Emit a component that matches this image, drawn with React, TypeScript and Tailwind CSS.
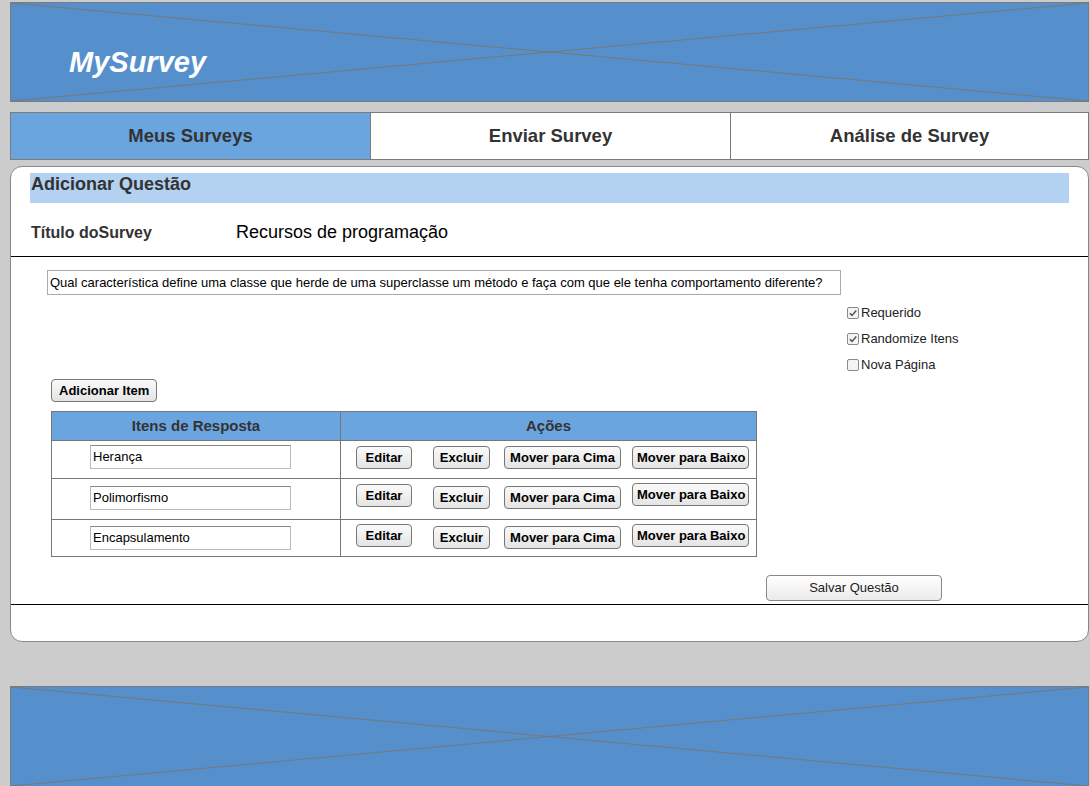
import React from 'react';

const items = [
  { text: 'Herança', input: 'mt-[4px]', edit: 'mt-[5px]', del: 'mt-[5px]', up: 'mt-[5px]', down: 'mt-[5px]' },
  { text: 'Polimorfismo', input: 'mt-[7px]', edit: 'mt-[5px]', del: 'mt-[7px]', up: 'mt-[7px]', down: 'mt-[4px]' },
  { text: 'Encapsulamento', input: 'mt-[6px]', edit: 'mt-[4px]', del: 'mt-[6px]', up: 'mt-[6px]', down: 'mt-[4px]' },
];

const rowHeights = ['h-[38px]', 'h-[41px]', 'h-[37px]'];

function Placeholder({ children, className }: { children?: React.ReactNode; className: string }) {
  return (
    <div className={`relative border border-[#7b7b7b] bg-[#5590cc] ${className}`}>
      <svg className="absolute inset-0 w-full h-full" preserveAspectRatio="none" viewBox="0 0 100 100">
        <line x1="0" y1="0" x2="100" y2="100" stroke="#777" strokeWidth="1" vectorEffect="non-scaling-stroke" />
        <line x1="0" y1="100" x2="100" y2="0" stroke="#777" strokeWidth="1" vectorEffect="non-scaling-stroke" />
      </svg>
      {children}
    </div>
  );
}

function Btn({ children, className }: { children: React.ReactNode; className?: string }) {
  return (
    <button
      className={`h-[23px] px-[4px] border border-[#777] rounded-[4px] bg-gradient-to-b from-[#fafafa] to-[#e4e4e4] text-[13px] font-bold text-black leading-none whitespace-nowrap ${className ?? ''}`}
    >
      {children}
    </button>
  );
}

function Check({ checked, label }: { checked: boolean; label: string }) {
  return (
    <div className="flex items-center h-[26px] gap-[2px]">
      <span className="w-[12px] h-[12px] border border-[#8a8a8a] rounded-[2px] bg-[#f4f4f4] flex items-center justify-center">
        {checked && (
          <svg width="10" height="10" viewBox="0 0 10 10">
            <path d="M1.8 5.2 L4 7.4 L8.3 2.6" stroke="#555" strokeWidth="1.5" fill="none" />
          </svg>
        )}
      </span>
      <span className="text-[13px] text-[#222]">{label}</span>
    </div>
  );
}

export default function App() {
  return (
    <div className="w-[1090px] h-[786px] overflow-hidden bg-[#cccccc] font-['Liberation_Sans',Arial,sans-serif] pt-[2px] pl-[10px] pr-[1px]">
      <Placeholder className="h-[100px]">
        <div className="relative pl-[58px] pt-[38px] text-[29px] font-bold italic text-white">MySurvey</div>
      </Placeholder>

      <div className="mt-[10px] h-[48px] flex border border-[#7b7b7b] bg-white text-[18.5px] font-bold text-[#333]">
        <div className="w-[360px] bg-[#6aa5e0] flex items-center justify-center border-r border-[#7b7b7b]">Meus Surveys</div>
        <div className="w-[360px] flex items-center justify-center border-r border-[#7b7b7b]">Enviar Survey</div>
        <div className="flex-1 flex items-center justify-center">Análise de Survey</div>
      </div>

      <div className="mt-[6px] h-[476px] rounded-[12px] border border-[#888] bg-white">
        <div className="mx-[19px] mt-[6px] h-[30px] bg-[#b3d1f0] pl-[1px] text-[18px] font-bold text-[#333] leading-[22px]">
          Adicionar Questão
        </div>
        <div className="h-[53px] flex items-center pl-[20px] pt-[6px]">
          <span className="w-[205px] text-[16px] font-bold text-[#333]">Título doSurvey</span>
          <span className="text-[18px] text-black">Recursos de programação</span>
        </div>
        <div className="border-t border-black" />

        <div className="pl-[36px] pt-[13px]">
          <div className="w-[794px] h-[25px] border border-[#aaa] flex items-center pl-[2px] text-[13px] text-black whitespace-nowrap">
            Qual característica define uma classe que herde de uma superclasse um método e faça com que ele tenha comportamento diferente?
          </div>
          <div className="ml-[800px] mt-[5px]">
            <Check checked label="Requerido" />
            <Check checked label="Randomize Itens" />
            <Check checked={false} label="Nova Página" />
          </div>
          <Btn className="ml-[4px] mt-0 h-[22px] px-[7px]">Adicionar Item</Btn>

          <table className="ml-[4px] mt-[9px] border-collapse border border-[#777] w-[706px]">
            <thead>
              <tr className="h-[29px] bg-[#6aa5e0] text-[15px] font-bold text-[#333]">
                <th className="w-[289px] border border-[#777] font-bold">Itens de Resposta</th>
                <th className="border border-[#777] font-bold">Ações</th>
              </tr>
            </thead>
            <tbody>
              {items.map((it, i) => (
                <tr key={it.text} className={`${rowHeights[i]} align-top`}>
                  <td className="border border-[#777] p-0">
                    <div className={`ml-[38px] w-[201px] h-[24px] border border-[#bbb] border-t-[#888] flex items-center pl-[2px] text-[13px] text-black ${it.input}`}>
                      {it.text}
                    </div>
                  </td>
                  <td className="border border-[#777] p-0">
                    <div className="flex items-start pl-[15px]">
                      <Btn className={`w-[56px] ${it.edit}`}>Editar</Btn>
                      <Btn className={`ml-[21px] w-[57px] ${it.del}`}>Excluir</Btn>
                      <Btn className={`ml-[14px] w-[117px] px-0 ${it.up}`}>Mover para Cima</Btn>
                      <Btn className={`ml-[11px] w-[117px] px-0 ${it.down}`}>Mover para Baixo</Btn>
                    </div>
                  </td>
                </tr>
              ))}
            </tbody>
          </table>

          <button className="ml-[719px] mt-[18px] w-[176px] h-[26px] border border-[#888] rounded-[4px] bg-gradient-to-b from-white to-[#ebebeb] text-[13px] text-[#222]">
            Salvar Questão
          </button>
        </div>
        <div className="mt-[3px] border-t border-black" />
      </div>

      <Placeholder className="mt-[44px] h-[101px]" />
    </div>
  );
}
